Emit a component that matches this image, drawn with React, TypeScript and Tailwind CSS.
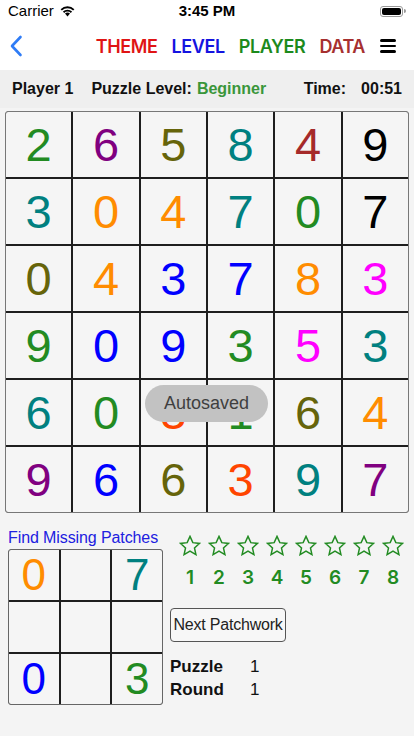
import React from 'react';

type Cell = { v: string; c: string };

const GREEN = '#228b22';
const PURPLE = '#800080';
const OLIVE = '#66640a';
const TEAL = '#008080';
const BROWN = '#a52a2a';
const ORANGE = '#ff8c00';
const BLUE = '#0000ff';
const MAGENTA = '#ff00ff';
const RED_ORANGE = '#ff4500';
const BLACK = '#000000';

const board: Cell[][] = [
  [{ v: '2', c: GREEN }, { v: '6', c: PURPLE }, { v: '5', c: OLIVE }, { v: '8', c: TEAL }, { v: '4', c: BROWN }, { v: '9', c: BLACK }],
  [{ v: '3', c: TEAL }, { v: '0', c: ORANGE }, { v: '4', c: ORANGE }, { v: '7', c: TEAL }, { v: '0', c: GREEN }, { v: '7', c: BLACK }],
  [{ v: '0', c: OLIVE }, { v: '4', c: ORANGE }, { v: '3', c: BLUE }, { v: '7', c: BLUE }, { v: '8', c: ORANGE }, { v: '3', c: MAGENTA }],
  [{ v: '9', c: GREEN }, { v: '0', c: BLUE }, { v: '9', c: BLUE }, { v: '3', c: GREEN }, { v: '5', c: MAGENTA }, { v: '3', c: TEAL }],
  [{ v: '6', c: TEAL }, { v: '0', c: GREEN }, { v: '3', c: RED_ORANGE }, { v: '1', c: GREEN }, { v: '6', c: OLIVE }, { v: '4', c: ORANGE }],
  [{ v: '9', c: PURPLE }, { v: '6', c: BLUE }, { v: '6', c: OLIVE }, { v: '3', c: RED_ORANGE }, { v: '9', c: TEAL }, { v: '7', c: PURPLE }],
];

const patch: (Cell | null)[] = [
  { v: '0', c: ORANGE }, null, { v: '7', c: TEAL },
  null, null, null,
  { v: '0', c: BLUE }, null, { v: '3', c: GREEN },
];

const Star = () => (
  <svg width="22" height="21" viewBox="0 0 24 23" fill="none">
    <path
      d="M12 1.5l3.1 6.9 7.4.8-5.6 5 1.6 7.3L12 17.7l-6.5 3.8 1.6-7.3-5.6-5 7.4-.8z"
      stroke="#228b22"
      strokeWidth="1.6"
      strokeLinejoin="miter"
    />
  </svg>
);

export default function App() {
  return (
    <div className="w-[414px] h-[736px] bg-[#f4f4f4] overflow-hidden relative text-black" style={{ fontFamily: '"Liberation Sans", Arial, sans-serif' }}>
      {/* Header */}
      <div className="bg-white">
        {/* Status bar */}
        <div className="h-[22px] flex items-center justify-between px-2 text-[15px]">
          <div className="flex items-center gap-[5px] w-[100px]">
            <span>Carrier</span>
            <svg width="17" height="12" viewBox="0 0 17 12">
              <path d="M8.5 11.5L6 8.6a3.6 3.6 0 0 1 5 0z" fill="#000" />
              <path d="M3.9 6.5a6.6 6.6 0 0 1 9.2 0l-1.3 1.4a4.7 4.7 0 0 0-6.6 0z" fill="#000" />
              <path d="M1.6 4.2a9.8 9.8 0 0 1 13.8 0l-1.3 1.4a7.9 7.9 0 0 0-11.2 0z" fill="#000" />
            </svg>
          </div>
          <span className="font-bold">3:45 PM</span>
          <div className="w-[100px] flex justify-end">
            <div className="flex items-center">
              <div className="w-[23px] h-[11px] rounded-[3px] border border-[#999] p-[1px]">
                <div className="w-full h-full bg-black rounded-[2px]" />
              </div>
              <div className="w-[1.5px] h-[4px] bg-[#999] rounded-r-sm ml-[1px]" />
            </div>
          </div>
        </div>
        {/* Nav bar */}
        <div className="h-[48px] flex items-center pl-[9px] pr-[18px]">
          <svg width="14" height="22" viewBox="0 0 14 22">
            <path d="M11.5 2L3 11l8.5 9" stroke="#2f7cf6" strokeWidth="2.6" fill="none" strokeLinecap="round" strokeLinejoin="round" />
          </svg>
          <div className="flex-1" />
          <div className="flex items-center gap-[14px] text-[18px] font-semibold tracking-[-0.4px]" style={{ fontFamily: 'Inter, "Liberation Sans", sans-serif' }}>
            <span className="text-[#e01414]">THEME</span>
            <span className="text-[#1414e0]">LEVEL</span>
            <span className="text-[#1c8a1c]">PLAYER</span>
            <span className="text-[#a63030]">DATA</span>
            <div className="flex flex-col gap-[3px] ml-[1px]">
              <div className="w-[16px] h-[2.5px] bg-black rounded-full" />
              <div className="w-[16px] h-[2.5px] bg-black rounded-full" />
              <div className="w-[16px] h-[2.5px] bg-black rounded-full" />
            </div>
          </div>
        </div>
      </div>

      {/* Info bar */}
      <div className="h-[38px] bg-[#efefef] flex items-center px-3 text-[16px] font-bold text-[#111]">
        <span>Player 1</span>
        <span className="ml-[18px]">Puzzle Level:</span>
        <span className="ml-[5px] text-[#3a963a]">Beginner</span>
        <div className="flex-1" />
        <span>Time:</span>
        <span className="ml-[15px]">00:51</span>
      </div>

      {/* Main board */}
      <div className="px-[5px] pt-[3px]">
        <div className="w-[404px] grid grid-cols-6 gap-[2px] bg-[#1e1e1e] border border-[#777] rounded-[3px] overflow-hidden">
          {board.flat().map((cell, i) => (
            <div key={i} className="h-[65px] bg-[#f5f5f5] flex items-center justify-center">
              <span className="text-[47px] leading-none" style={{ color: cell.c }}>{cell.v}</span>
            </div>
          ))}
        </div>
      </div>

      {/* Bottom section */}
      <div className="flex pl-[8px] pt-[16px] gap-[5px]">
        <div className="flex flex-col">
          <span className="text-[16px] leading-[18px] text-[#2020e0] tracking-[-0.1px]">Find Missing Patches</span>
          <div className="mt-[2px] w-[155px] grid grid-cols-3 gap-[2px] bg-[#1e1e1e] border border-[#666] rounded-[3px] overflow-hidden">
            {patch.map((cell, i) => (
              <div key={i} className="h-[50px] bg-[#f5f5f5] flex items-center justify-center">
                {cell && (
                  <span className="text-[44px] leading-none" style={{ color: cell.c }}>{cell.v}</span>
                )}
              </div>
            ))}
          </div>
        </div>

        <div className="flex flex-col pl-[2px]">
          <div className="flex gap-[7px] mt-[6px] ml-[9px]">
            {[1, 2, 3, 4, 5, 6, 7, 8].map((n) => (
              <div key={n} className="w-[22px] flex flex-col items-center">
                <Star />
                <span className="mt-[12px] text-[19px] leading-none font-semibold text-[#228b22]" style={{ fontFamily: 'Inter, "Liberation Sans", sans-serif' }}>{n}</span>
              </div>
            ))}
          </div>
          <button className="mt-[21px] w-[116px] h-[34px] border border-[#555] rounded-[4px] bg-[#f7f7f7] text-[16px] text-[#222] tracking-[-0.2px]">
            Next Patchwork
          </button>
          <div className="mt-[13px] grid grid-cols-[80px_auto] text-[17px] font-bold leading-[23px] text-[#111]">
            <span>Puzzle</span>
            <span className="font-normal">1</span>
            <span>Round</span>
            <span className="font-normal">1</span>
          </div>
        </div>
      </div>

      {/* Toast */}
      <div className="absolute left-[145px] top-[385px] w-[123px] h-[37px] rounded-full bg-[#c2c2c2] flex items-center justify-center text-[18px] text-[#3f3f3f]">
        Autosaved
      </div>
    </div>
  );
}
